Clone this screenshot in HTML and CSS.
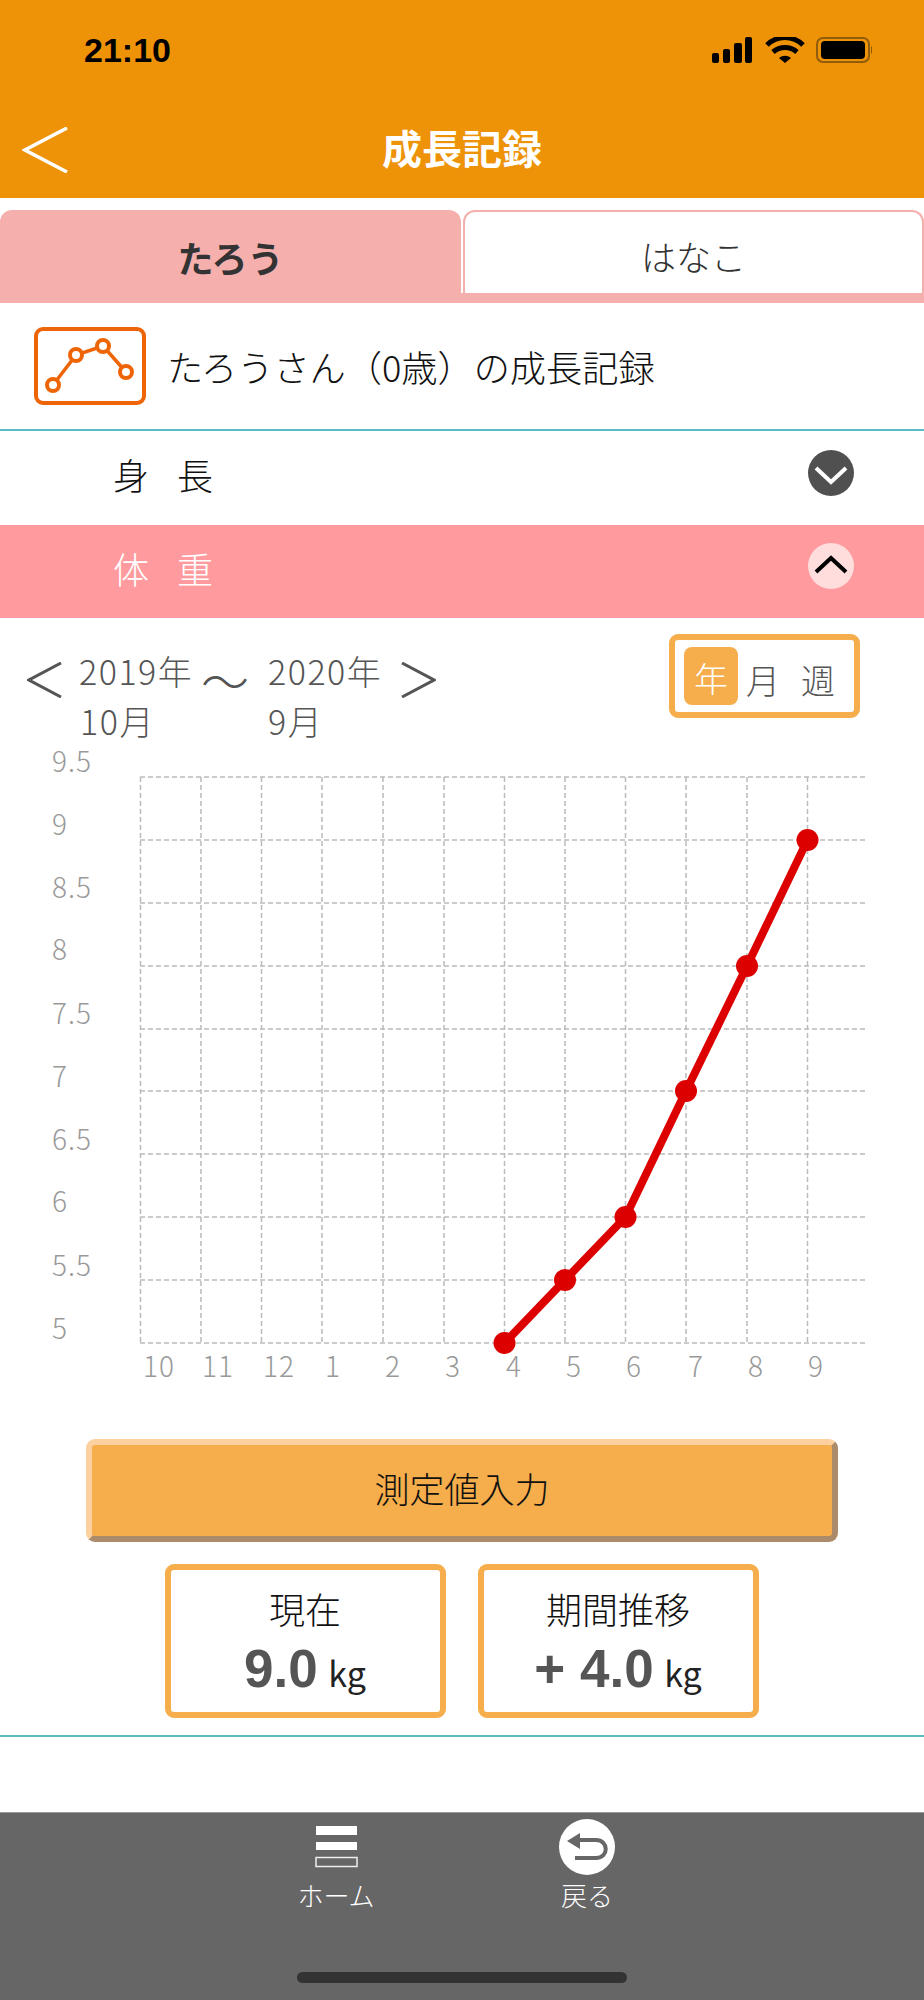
FILE: index.html
```html
<!DOCTYPE html>
<html lang="ja">
<head>
  <meta charset="UTF-8">
  <meta name="viewport" content="width=device-width, initial-scale=1.0">
  <title>成長記録</title>
  <link rel="stylesheet" href="styles.css">
</head>
<body>
  <div class="header">
    <div class="status-bar">
      <div class="time">21:10</div>
      <svg class="status-icons" width="160" height="26" viewBox="0 0 160 26">
        <rect x="0" y="16" width="7" height="10" rx="2"/>
        <rect x="11" y="12" width="7" height="14" rx="2"/>
        <rect x="22" y="6" width="8" height="20" rx="2"/>
        <rect x="33" y="0" width="7" height="26" rx="2"/>
        <path d="M55 8 C65 -2 81 -2 91 8" fill="none" stroke="#000" stroke-width="5"/>
        <path d="M61 15 C68 9 78 9 85 15" fill="none" stroke="#000" stroke-width="5"/>
        <path d="M67 21 L73 26 L79 21 C75 18 71 18 67 21 Z"/>
        <rect x="105" y="1" width="52" height="24" rx="6" fill="none" stroke="#8f5d0c" stroke-width="2"/>
        <rect x="109" y="4" width="44" height="18" rx="4"/>
        <path d="M159 9 C161 10 161 16 159 17 Z" fill="#8f5d0c"/>
      </svg>
    </div>
    <div class="nav-bar">
      <svg class="back-arrow" width="46" height="46" viewBox="0 0 46 46">
        <path d="M45 1 L3 23 L45 45" fill="none" stroke="#fff" stroke-width="3.5"/>
      </svg>
      <div class="page-title">成長記録</div>
    </div>
  </div>

  <div class="tabs">
    <div class="tab active">たろう</div>
    <div class="tab">はなこ</div>
  </div>

  <div class="record-title">
    <svg width="112" height="78" viewBox="0 0 112 78">
      <rect x="2" y="2" width="108" height="74" rx="7" fill="none" stroke="#ee6507" stroke-width="4"/>
      <path d="M19 58 L42 28 L69 19 L92 45" fill="none" stroke="#ee6507" stroke-width="3.5"/>
      <circle cx="19" cy="58" r="6" fill="#fff" stroke="#ee6507" stroke-width="4"/>
      <circle cx="42" cy="28" r="6" fill="#fff" stroke="#ee6507" stroke-width="4"/>
      <circle cx="69" cy="19" r="6" fill="#fff" stroke="#ee6507" stroke-width="4"/>
      <circle cx="92" cy="45" r="6" fill="#fff" stroke="#ee6507" stroke-width="4"/>
    </svg>
    <span>たろうさん（0歳）の成長記録</span>
  </div>

  <div class="accordion">
    <span class="accordion-label">身長</span>
    <svg width="46" height="46" viewBox="0 0 46 46">
      <circle cx="23" cy="23" r="23" fill="#505050"/>
      <path d="M8 18 L23 32 L38 18" fill="none" stroke="#fff" stroke-width="4"/>
    </svg>
  </div>
  <div class="accordion open">
    <span class="accordion-label">体重</span>
    <svg width="46" height="46" viewBox="0 0 46 46">
      <circle cx="23" cy="23" r="23" fill="#ffdddd"/>
      <path d="M8 29 L23 15 L38 29" fill="none" stroke="#000" stroke-width="4"/>
    </svg>
  </div>

  <div class="range-row">
    <svg class="range-arrow" width="36" height="36" viewBox="0 0 36 36">
      <path d="M34 1 L2 18 L34 35" fill="none" stroke="#555" stroke-width="3"/>
    </svg>
    <div class="range-date"><div>2019年</div><div class="indent">10月</div></div>
    <div class="range-wave">〜</div>
    <div class="range-date"><div>2020年</div><div>9月</div></div>
    <svg class="range-arrow" width="36" height="36" viewBox="0 0 36 36">
      <path d="M2 1 L34 18 L2 35" fill="none" stroke="#555" stroke-width="3"/>
    </svg>
    <div class="period">
      <span class="period-item selected">年</span>
      <span class="period-item">月</span>
      <span class="period-item">週</span>
    </div>
  </div>

  <svg class="chart" width="924" height="670" viewBox="0 -20 924 670">
    <g class="grid">
      <line x1="140" y1="27" x2="868" y2="27"/>
      <line x1="140" y1="90" x2="868" y2="90"/>
      <line x1="140" y1="153" x2="868" y2="153"/>
      <line x1="140" y1="216" x2="868" y2="216"/>
      <line x1="140" y1="279" x2="868" y2="279"/>
      <line x1="140" y1="341" x2="868" y2="341"/>
      <line x1="140" y1="404" x2="868" y2="404"/>
      <line x1="140" y1="467" x2="868" y2="467"/>
      <line x1="140" y1="530" x2="868" y2="530"/>
      <line x1="140" y1="593" x2="868" y2="593"/>
      <line x1="140.5" y1="27" x2="140.5" y2="593"/>
      <line x1="201" y1="27" x2="201" y2="593"/>
      <line x1="261.5" y1="27" x2="261.5" y2="593"/>
      <line x1="322" y1="27" x2="322" y2="593"/>
      <line x1="383" y1="27" x2="383" y2="593"/>
      <line x1="444" y1="27" x2="444" y2="593"/>
      <line x1="504.5" y1="27" x2="504.5" y2="593"/>
      <line x1="565" y1="27" x2="565" y2="593"/>
      <line x1="625.5" y1="27" x2="625.5" y2="593"/>
      <line x1="686" y1="27" x2="686" y2="593"/>
      <line x1="747" y1="27" x2="747" y2="593"/>
      <line x1="807.5" y1="27" x2="807.5" y2="593"/>
    </g>
    <g class="axis-text">
      <text x="52" y="22">9.5</text>
      <text x="52" y="85">9</text>
      <text x="52" y="148">8.5</text>
      <text x="52" y="210">8</text>
      <text x="52" y="274">7.5</text>
      <text x="52" y="337">7</text>
      <text x="52" y="400">6.5</text>
      <text x="52" y="462">6</text>
      <text x="52" y="526">5.5</text>
      <text x="52" y="589">5</text>
    </g>
    <g class="axis-text month">
      <text x="159" y="627">10</text>
      <text x="218" y="627">11</text>
      <text x="279" y="627">12</text>
      <text x="333" y="627">1</text>
      <text x="393" y="627">2</text>
      <text x="453" y="627">3</text>
      <text x="514" y="627">4</text>
      <text x="574" y="627">5</text>
      <text x="634" y="627">6</text>
      <text x="696" y="627">7</text>
      <text x="756" y="627">8</text>
      <text x="816" y="627">9</text>
    </g>
    <polyline points="504.5,593 565,530 625.5,467 686,341 747,216 807.5,90" fill="none" stroke="#dd0000" stroke-width="8"/>
    <g fill="#dd0000">
      <circle cx="504.5" cy="593" r="11"/>
      <circle cx="565" cy="530" r="11"/>
      <circle cx="625.5" cy="467" r="11"/>
      <circle cx="686" cy="341" r="11"/>
      <circle cx="747" cy="216" r="11"/>
      <circle cx="807.5" cy="90" r="11"/>
    </g>
  </svg>

  <div class="action">
    <button class="input-button">測定値入力</button>
  </div>

  <div class="summary">
    <div class="summary-card">
      <div class="summary-label">現在</div>
      <div class="summary-value"><b>9.0</b> <span class="unit">kg</span></div>
    </div>
    <div class="summary-card">
      <div class="summary-label">期間推移</div>
      <div class="summary-value"><b>+ 4.0</b> <span class="unit">kg</span></div>
    </div>
  </div>

  <div class="footer">
    <div class="footer-nav">
      <div class="footer-item">
        <div class="footer-icon">
          <svg class="home-icon" width="44" height="44" viewBox="0 0 44 44">
            <rect x="2" y="0" width="41" height="9" fill="#fff"/>
            <rect x="2" y="16" width="41" height="8" fill="#fff"/>
            <rect x="2" y="31.5" width="41" height="9" fill="none" stroke="#eee" stroke-width="1.5"/>
          </svg>
        </div>
        <span>ホーム</span>
      </div>
      <div class="footer-item">
        <div class="footer-icon">
          <svg width="56" height="56" viewBox="0 0 56 56">
            <circle cx="28" cy="28" r="28" fill="#fff"/>
            <path d="M8 22 L21 14 L21 30 Z" fill="#666"/>
            <path d="M20 21 H37 C50 21 50 39 37 39 H16" fill="none" stroke="#666" stroke-width="4"/>
          </svg>
        </div>
        <span>戻る</span>
      </div>
    </div>
    <div class="home-indicator"></div>
  </div>
</body>
</html>
```

FILE: styles.css
```css
* {
  margin: 0;
  padding: 0;
  box-sizing: border-box;
}
body {
  width: 924px;
  height: 2000px;
  overflow: hidden;
  background: #fff;
  color: #222;
  font-family: "Noto Sans CJK JP", "Liberation Sans", sans-serif;
  font-weight: 300;
}

/* header */
.header {
  height: 198px;
  background: #ee9207;
}
.status-bar {
  height: 100px;
  display: flex;
  justify-content: space-between;
  align-items: center;
  padding: 0 52px 0 84px;
}
.time {
  font-family: "Liberation Sans", sans-serif;
  font-size: 34px;
  font-weight: bold;
  color: #000;
}
.nav-bar {
  height: 98px;
  display: flex;
  align-items: center;
  justify-content: center;
  padding-bottom: 4px;
  position: relative;
}
.back-arrow {
  position: absolute;
  left: 22px;
  top: 27px;
}
.page-title {
  font-size: 40px;
  font-weight: 700;
  color: #fff;
}

/* tabs */
.tabs {
  display: flex;
  gap: 2px;
  height: 93px;
  margin-top: 12px;
  background: linear-gradient(#fff 83px, #f5afac 83px);
}
.tab {
  width: 461px;
  display: flex;
  align-items: center;
  justify-content: center;
  font-size: 35px;
  color: #333;
  height: 83px;
  padding-top: 5px;
  background: #fff;
  border: 2px solid #f5afac;
  border-bottom: none;
  border-radius: 12px 12px 0 0;
}
.tab.active {
  height: 93px;
  padding: 0;
  font-size: 36px;
  font-weight: 700;
  background: #f5afac;
  border: none;
}

/* title with icon */
.record-title {
  height: 128px;
  display: flex;
  align-items: center;
  gap: 21px;
  padding-left: 34px;
  border-bottom: 2px solid #5bbcc8;
  font-size: 36.2px;
  color: #111;
}

/* accordions */
.accordion {
  height: 93.5px;
  display: flex;
  align-items: center;
  justify-content: space-between;
  padding: 0 70px 8px 113px;
  font-size: 36px;
  color: #111;
}
.accordion svg {
  margin-top: -2px;
}
.accordion.open {
  background: #ff9b9f;
  color: #fff;
}
.accordion.open .accordion-label {
  padding-top: 2px;
}
.accordion-label {
  letter-spacing: 28px;
}

/* period selector */
.range-row {
  height: 112px;
  display: flex;
  align-items: flex-start;
  padding: 28px 0 0 27px;
  color: #555;
  font-size: 34px;
  line-height: 50px;
  position: relative;
}
.range-arrow {
  margin-top: 16px;
  flex: none;
}
.range-date {
  width: 124px;
  margin-left: 16px;
  letter-spacing: 1.5px;
}
.range-date .indent {
  padding-left: 1px;
}
.range-wave {
  width: 48px;
  margin: 8px 19px 0 -2px;
  font-size: 48px;
  line-height: 50px;
}
.range-wave + .range-date {
  margin-left: 0;
}
.range-date + .range-arrow {
  margin-left: 8px;
}
.period {
  position: absolute;
  left: 669px;
  top: 16px;
  width: 191px;
  height: 84px;
  display: flex;
  align-items: center;
  gap: 3px;
  padding-left: 9px;
  border: 6px solid #f6ad4b;
  border-radius: 9px;
}
.period-item {
  width: 52px;
  height: 58px;
  line-height: 66px;
  text-align: center;
  font-size: 34px;
  border-radius: 8px;
}
.period-item.selected {
  width: 54px;
  margin-right: -4px;
  line-height: 62px;
  background: #f6ad4b;
  color: #fff;
}

/* chart */
.chart {
  display: block;
}
.grid line {
  stroke: #bbb;
  stroke-width: 1.5;
  stroke-dasharray: 5 3;
}
.axis-text text {
  font-family: "Noto Sans CJK JP", sans-serif;
  font-weight: 300;
  font-size: 28px;
  letter-spacing: 1px;
  fill: #999;
}
.month text {
  text-anchor: middle;
}

/* button */
.action {
  margin-top: 39px;
  padding: 0 86px 0 86px;
}
.input-button {
  width: 100%;
  height: 103px;
  padding-bottom: 6px;
  font: inherit;
  font-size: 35px;
  color: #111;
  background: #f6ad4b;
  border: 6px solid;
  border-color: #fdd0a0 #ac8b6b #ac8b6b #fdd0a0;
  border-radius: 9px;
}

/* summary */
.summary {
  display: flex;
  justify-content: center;
  gap: 32px;
  padding: 22px 1px 17px 0;
  border-bottom: 2px solid #5bbcc8;
}
.summary-card {
  width: 281px;
  height: 154px;
  border: 6px solid #f6ad4b;
  border-radius: 9px;
  text-align: center;
}
.summary-label {
  font-size: 36px;
  line-height: 50px;
  margin-top: 13px;
  color: #111;
}
.summary-value {
  font-size: 34px;
  line-height: 72px;
  color: #222;
}
.summary-value b {
  font-family: "Liberation Sans", sans-serif;
  font-size: 53px;
  font-weight: 700;
  color: #555;
}
.unit {
  margin-left: 3px;
  font-weight: 400;
}

/* footer */
.footer {
  position: absolute;
  left: 0;
  right: 0;
  bottom: 0;
  width: 924px;
  height: 188px;
  background: #666;
  border-top: 1px solid #999;
}
.footer-nav {
  display: flex;
  height: 159px;
  padding-left: 297px;
  gap: 173px;
  padding-top: 6px;
}
.footer-item {
  width: 78px;
  display: flex;
  flex-direction: column;
  align-items: center;
  font-size: 26px;
  line-height: 36px;
  color: #fff;
}
.footer-icon {
  height: 58px;
}
.home-icon {
  margin-top: 7px;
}
.home-indicator {
  width: 330px;
  height: 11px;
  margin-left: 297px;
  border-radius: 6px;
  background: #333;
}
```
